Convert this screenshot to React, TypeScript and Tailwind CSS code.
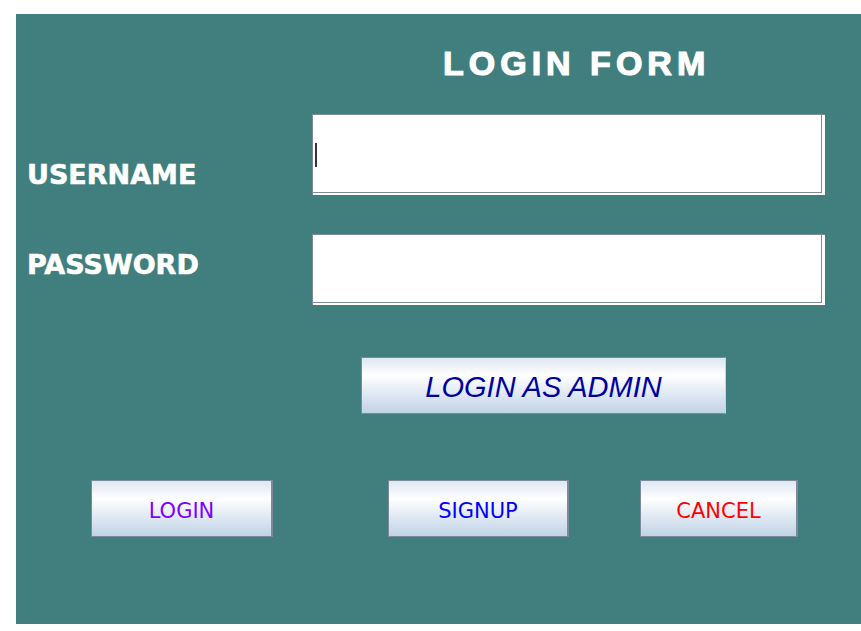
import React from "react";

function Field({ h, cursor }: { h: string; cursor?: boolean }) {
  return (
    <div className={`w-[513px] ${h} bg-white border-t border-l border-[#7b8b9b] pr-[3px] pb-[2px] flex`}>
      <div className="flex-1 border-r border-b border-[#7b8b9b] flex items-center pl-[2px]">
        {cursor && <div className="w-[2px] h-[24px] bg-[#333333] mt-[3px]" />}
      </div>
    </div>
  );
}

const grad =
  "bg-[linear-gradient(to_bottom,#dfe7f1_0%,#f4f7fb_22%,#ffffff_32%,#e9eff6_55%,#c1d3e7_100%)]";

function Btn({ w, color, label }: { w: string; color: string; label: string }) {
  return (
    <div
      className={`${w} h-[57px] ${grad} border border-[#7b8b9b] border-r-2 flex items-center justify-center ${color} text-[21px] leading-none`}
      style={{ fontFamily: '"DejaVu Sans", Verdana, sans-serif' }}
    >
      <span className="mt-[5px]">{label}</span>
    </div>
  );
}

export default function App() {
  return (
    <div className="w-[861px] h-[631px] bg-white pt-[14px] pl-[16px]">
      <div className="w-[845px] h-[610px] bg-[#417f7e] flex flex-col">
        <div
          className="pt-[32px] pl-[427px] text-white font-bold text-[34px] leading-[34px] tracking-[5px] whitespace-nowrap [-webkit-text-stroke:1.2px_white]"
          style={{ fontFamily: '"Liberation Sans", Arial, sans-serif' }}
        >
          LOGIN FORM
        </div>

        <div className="mt-[34px] flex">
          <div
            className="w-[296px] pl-[11px] pt-[47px] text-white font-bold text-[27px] leading-[27px] [-webkit-text-stroke:0.6px_white]"
            style={{ fontFamily: '"DejaVu Sans", Verdana, sans-serif' }}
          >
            USERNAME
          </div>
          <Field h="h-[81px]" cursor />
        </div>

        <div className="mt-[39px] flex">
          <div
            className="w-[296px] pl-[11px] pt-[17px] text-white font-bold text-[27px] leading-[27px] [-webkit-text-stroke:0.6px_white]"
            style={{ fontFamily: '"DejaVu Sans", Verdana, sans-serif' }}
          >
            PASSWORD
          </div>
          <Field h="h-[71px]" />
        </div>

        <div className="mt-[52px] ml-[345px]">
          <div
            className={`w-[365px] h-[57px] ${grad} border border-[#7b8b9b] border-r-[#c9d3dd] flex items-center justify-center text-[#0000a0] italic text-[29px] leading-none`}
            style={{ fontFamily: '"Liberation Sans", Arial, sans-serif' }}
          >
            <span className="mt-[4px]">LOGIN AS ADMIN</span>
          </div>
        </div>

        <div className="mt-[66px] flex pl-[75px]">
          <Btn w="w-[182px]" color="text-[#8000ff]" label="LOGIN" />
          <div className="w-[115px]" />
          <Btn w="w-[181px]" color="text-[#0000ff]" label="SIGNUP" />
          <div className="w-[71px]" />
          <Btn w="w-[158px]" color="text-[#ff0000]" label="CANCEL" />
        </div>
      </div>
    </div>
  );
}
